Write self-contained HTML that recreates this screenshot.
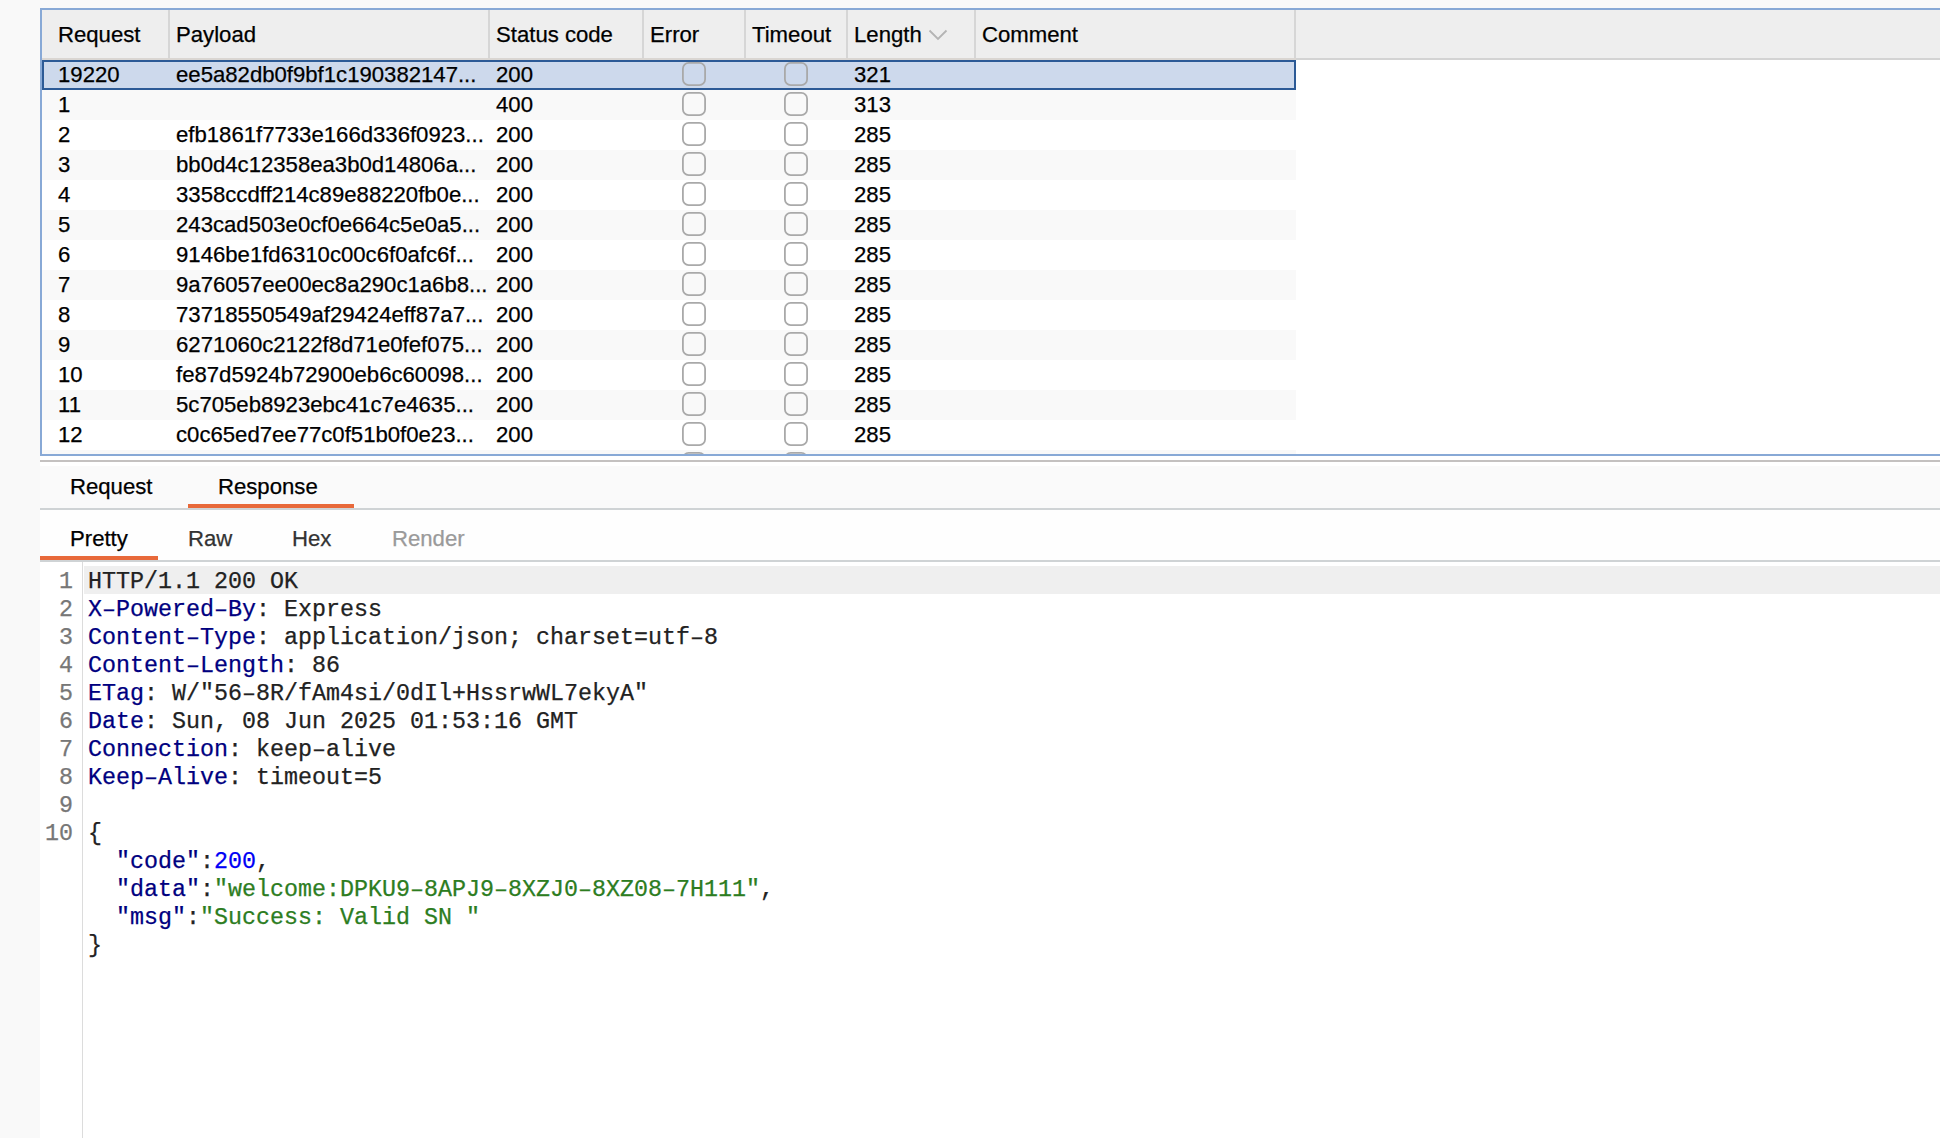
<!DOCTYPE html><html><head><meta charset="utf-8"><style>html,body{margin:0;padding:0;}
body{width:1940px;height:1138px;background:#f9f9f9;position:relative;overflow:hidden;font-family:"Liberation Sans",sans-serif;font-size:22.15px;color:#000;-webkit-text-stroke:0.25px currentColor;}
div,i,svg{position:absolute;}
.tblbg{left:40px;top:8px;width:1900px;height:448px;background:#fff;}
.hdr{left:42px;top:10px;width:1898px;height:48px;background:#eeeeee;}
.hdrline{left:42px;top:58px;width:1898px;height:2px;background:linear-gradient(to right,#dad6d2 1254px,#d3d3d3 1254px);}
.ht{top:23px;line-height:24px;white-space:nowrap;}
.hd{top:10px;height:48px;width:2px;background:#d6d6d6;}
.chev{left:928px;top:28.5px;}
.row{left:42px;width:1254px;height:30px;background:#fff;}
.row.odd{background:#f9f9f9;}
.row.sel{background:#cdd9ec;box-shadow:inset 0 0 0 2px #2c5a96;}
.c{line-height:30px;white-space:nowrap;}
.cb{}
.bl{background:#88a9d6;}
.bl-l{left:40px;top:8px;width:2px;height:448px;}
.bl-t{left:40px;top:8px;width:1900px;height:2px;}
.bl-b{left:40px;top:454px;width:1900px;height:2px;}
.below{left:40px;top:456px;width:1900px;height:682px;background:#fff;}
.sep1{left:40px;top:460px;width:1900px;height:2px;background:#c4c1c0;}
.tabbar{left:40px;top:466px;width:1900px;height:42px;background:#fafafa;}
.tabline{left:40px;top:508px;width:1900px;height:2px;background:#cfd3d5;}
.tt{line-height:24px;white-space:nowrap;color:#000;}
.tt.g{color:#333;}
.tt.lg{color:#9a9a9a;}
.ul{height:4px;background:#e8693a;}
.subbar{left:40px;top:510px;width:1900px;height:50px;background:#fefefe;}
.subline{left:40px;top:560px;width:1900px;height:2px;background:#cfd3d5;}
.codebg{left:40px;top:562px;width:1900px;height:576px;background:#fff;}
.gutline{left:82px;top:562px;width:1px;height:576px;background:#dcdcdc;}
.curline{left:84px;top:566px;width:1856px;height:28px;background:#efefef;}
.ln{left:41px;width:32px;margin-top:2px;text-align:right;font-family:"Liberation Mono",monospace;font-size:23.33px;line-height:28px;color:#777;}
.cl{left:88px;margin-top:2px;font-family:"Liberation Mono",monospace;font-size:23.33px;line-height:28px;color:#222;white-space:pre;}
.k{color:#000080;}
.k0{color:#222;}
.s{color:#2d7d1f;}
.n{color:#0000f5;}
</style></head><body>
<div class="tblbg"></div>
<div class="hdr"></div><div class="hdrline"></div>
<div class="ht" style="left:58px">Request</div>
<div class="ht" style="left:176px">Payload</div>
<div class="ht" style="left:496px">Status code</div>
<div class="ht" style="left:650px">Error</div>
<div class="ht" style="left:752px">Timeout</div>
<div class="ht" style="left:854px">Length</div>
<div class="ht" style="left:982px">Comment</div>
<div class="hd" style="left:168px"></div>
<div class="hd" style="left:488px"></div>
<div class="hd" style="left:642px"></div>
<div class="hd" style="left:744px"></div>
<div class="hd" style="left:846px"></div>
<div class="hd" style="left:974px"></div>
<div class="hd" style="left:1294px"></div>
<svg class="chev" width="20" height="12" viewBox="0 0 20 12"><path d="M1.5 1.5 L10 10 L18.5 1.5" fill="none" stroke="#b4b4b4" stroke-width="1.8"/></svg>
<div class="row sel" style="top:60px"></div>
<div class="c" style="left:58px;top:60px">19220</div>
<div class="c" style="left:176px;top:60px">ee5a82db0f9bf1c190382147...</div>
<div class="c" style="left:496px;top:60px">200</div>
<div class="c" style="left:854px;top:60px">321</div>
<svg class="cb" style="left:681px;top:61px" width="26" height="26" viewBox="0 0 26 26"><rect x="1.9" y="1.9" width="22.2" height="22.2" rx="5.8" fill="none" stroke="#a9a9a9" stroke-width="1.8"/></svg>
<svg class="cb" style="left:783px;top:61px" width="26" height="26" viewBox="0 0 26 26"><rect x="1.9" y="1.9" width="22.2" height="22.2" rx="5.8" fill="none" stroke="#a9a9a9" stroke-width="1.8"/></svg>
<div class="row odd" style="top:90px"></div>
<div class="c" style="left:58px;top:90px">1</div>
<div class="c" style="left:496px;top:90px">400</div>
<div class="c" style="left:854px;top:90px">313</div>
<svg class="cb" style="left:681px;top:91px" width="26" height="26" viewBox="0 0 26 26"><rect x="1.9" y="1.9" width="22.2" height="22.2" rx="5.8" fill="none" stroke="#a9a9a9" stroke-width="1.8"/></svg>
<svg class="cb" style="left:783px;top:91px" width="26" height="26" viewBox="0 0 26 26"><rect x="1.9" y="1.9" width="22.2" height="22.2" rx="5.8" fill="none" stroke="#a9a9a9" stroke-width="1.8"/></svg>
<div class="row" style="top:120px"></div>
<div class="c" style="left:58px;top:120px">2</div>
<div class="c" style="left:176px;top:120px">efb1861f7733e166d336f0923...</div>
<div class="c" style="left:496px;top:120px">200</div>
<div class="c" style="left:854px;top:120px">285</div>
<svg class="cb" style="left:681px;top:121px" width="26" height="26" viewBox="0 0 26 26"><rect x="1.9" y="1.9" width="22.2" height="22.2" rx="5.8" fill="none" stroke="#a9a9a9" stroke-width="1.8"/></svg>
<svg class="cb" style="left:783px;top:121px" width="26" height="26" viewBox="0 0 26 26"><rect x="1.9" y="1.9" width="22.2" height="22.2" rx="5.8" fill="none" stroke="#a9a9a9" stroke-width="1.8"/></svg>
<div class="row odd" style="top:150px"></div>
<div class="c" style="left:58px;top:150px">3</div>
<div class="c" style="left:176px;top:150px">bb0d4c12358ea3b0d14806a...</div>
<div class="c" style="left:496px;top:150px">200</div>
<div class="c" style="left:854px;top:150px">285</div>
<svg class="cb" style="left:681px;top:151px" width="26" height="26" viewBox="0 0 26 26"><rect x="1.9" y="1.9" width="22.2" height="22.2" rx="5.8" fill="none" stroke="#a9a9a9" stroke-width="1.8"/></svg>
<svg class="cb" style="left:783px;top:151px" width="26" height="26" viewBox="0 0 26 26"><rect x="1.9" y="1.9" width="22.2" height="22.2" rx="5.8" fill="none" stroke="#a9a9a9" stroke-width="1.8"/></svg>
<div class="row" style="top:180px"></div>
<div class="c" style="left:58px;top:180px">4</div>
<div class="c" style="left:176px;top:180px">3358ccdff214c89e88220fb0e...</div>
<div class="c" style="left:496px;top:180px">200</div>
<div class="c" style="left:854px;top:180px">285</div>
<svg class="cb" style="left:681px;top:181px" width="26" height="26" viewBox="0 0 26 26"><rect x="1.9" y="1.9" width="22.2" height="22.2" rx="5.8" fill="none" stroke="#a9a9a9" stroke-width="1.8"/></svg>
<svg class="cb" style="left:783px;top:181px" width="26" height="26" viewBox="0 0 26 26"><rect x="1.9" y="1.9" width="22.2" height="22.2" rx="5.8" fill="none" stroke="#a9a9a9" stroke-width="1.8"/></svg>
<div class="row odd" style="top:210px"></div>
<div class="c" style="left:58px;top:210px">5</div>
<div class="c" style="left:176px;top:210px">243cad503e0cf0e664c5e0a5...</div>
<div class="c" style="left:496px;top:210px">200</div>
<div class="c" style="left:854px;top:210px">285</div>
<svg class="cb" style="left:681px;top:211px" width="26" height="26" viewBox="0 0 26 26"><rect x="1.9" y="1.9" width="22.2" height="22.2" rx="5.8" fill="none" stroke="#a9a9a9" stroke-width="1.8"/></svg>
<svg class="cb" style="left:783px;top:211px" width="26" height="26" viewBox="0 0 26 26"><rect x="1.9" y="1.9" width="22.2" height="22.2" rx="5.8" fill="none" stroke="#a9a9a9" stroke-width="1.8"/></svg>
<div class="row" style="top:240px"></div>
<div class="c" style="left:58px;top:240px">6</div>
<div class="c" style="left:176px;top:240px">9146be1fd6310c00c6f0afc6f...</div>
<div class="c" style="left:496px;top:240px">200</div>
<div class="c" style="left:854px;top:240px">285</div>
<svg class="cb" style="left:681px;top:241px" width="26" height="26" viewBox="0 0 26 26"><rect x="1.9" y="1.9" width="22.2" height="22.2" rx="5.8" fill="none" stroke="#a9a9a9" stroke-width="1.8"/></svg>
<svg class="cb" style="left:783px;top:241px" width="26" height="26" viewBox="0 0 26 26"><rect x="1.9" y="1.9" width="22.2" height="22.2" rx="5.8" fill="none" stroke="#a9a9a9" stroke-width="1.8"/></svg>
<div class="row odd" style="top:270px"></div>
<div class="c" style="left:58px;top:270px">7</div>
<div class="c" style="left:176px;top:270px">9a76057ee00ec8a290c1a6b8...</div>
<div class="c" style="left:496px;top:270px">200</div>
<div class="c" style="left:854px;top:270px">285</div>
<svg class="cb" style="left:681px;top:271px" width="26" height="26" viewBox="0 0 26 26"><rect x="1.9" y="1.9" width="22.2" height="22.2" rx="5.8" fill="none" stroke="#a9a9a9" stroke-width="1.8"/></svg>
<svg class="cb" style="left:783px;top:271px" width="26" height="26" viewBox="0 0 26 26"><rect x="1.9" y="1.9" width="22.2" height="22.2" rx="5.8" fill="none" stroke="#a9a9a9" stroke-width="1.8"/></svg>
<div class="row" style="top:300px"></div>
<div class="c" style="left:58px;top:300px">8</div>
<div class="c" style="left:176px;top:300px">73718550549af29424eff87a7...</div>
<div class="c" style="left:496px;top:300px">200</div>
<div class="c" style="left:854px;top:300px">285</div>
<svg class="cb" style="left:681px;top:301px" width="26" height="26" viewBox="0 0 26 26"><rect x="1.9" y="1.9" width="22.2" height="22.2" rx="5.8" fill="none" stroke="#a9a9a9" stroke-width="1.8"/></svg>
<svg class="cb" style="left:783px;top:301px" width="26" height="26" viewBox="0 0 26 26"><rect x="1.9" y="1.9" width="22.2" height="22.2" rx="5.8" fill="none" stroke="#a9a9a9" stroke-width="1.8"/></svg>
<div class="row odd" style="top:330px"></div>
<div class="c" style="left:58px;top:330px">9</div>
<div class="c" style="left:176px;top:330px">6271060c2122f8d71e0fef075...</div>
<div class="c" style="left:496px;top:330px">200</div>
<div class="c" style="left:854px;top:330px">285</div>
<svg class="cb" style="left:681px;top:331px" width="26" height="26" viewBox="0 0 26 26"><rect x="1.9" y="1.9" width="22.2" height="22.2" rx="5.8" fill="none" stroke="#a9a9a9" stroke-width="1.8"/></svg>
<svg class="cb" style="left:783px;top:331px" width="26" height="26" viewBox="0 0 26 26"><rect x="1.9" y="1.9" width="22.2" height="22.2" rx="5.8" fill="none" stroke="#a9a9a9" stroke-width="1.8"/></svg>
<div class="row" style="top:360px"></div>
<div class="c" style="left:58px;top:360px">10</div>
<div class="c" style="left:176px;top:360px">fe87d5924b72900eb6c60098...</div>
<div class="c" style="left:496px;top:360px">200</div>
<div class="c" style="left:854px;top:360px">285</div>
<svg class="cb" style="left:681px;top:361px" width="26" height="26" viewBox="0 0 26 26"><rect x="1.9" y="1.9" width="22.2" height="22.2" rx="5.8" fill="none" stroke="#a9a9a9" stroke-width="1.8"/></svg>
<svg class="cb" style="left:783px;top:361px" width="26" height="26" viewBox="0 0 26 26"><rect x="1.9" y="1.9" width="22.2" height="22.2" rx="5.8" fill="none" stroke="#a9a9a9" stroke-width="1.8"/></svg>
<div class="row odd" style="top:390px"></div>
<div class="c" style="left:58px;top:390px">11</div>
<div class="c" style="left:176px;top:390px">5c705eb8923ebc41c7e4635...</div>
<div class="c" style="left:496px;top:390px">200</div>
<div class="c" style="left:854px;top:390px">285</div>
<svg class="cb" style="left:681px;top:391px" width="26" height="26" viewBox="0 0 26 26"><rect x="1.9" y="1.9" width="22.2" height="22.2" rx="5.8" fill="none" stroke="#a9a9a9" stroke-width="1.8"/></svg>
<svg class="cb" style="left:783px;top:391px" width="26" height="26" viewBox="0 0 26 26"><rect x="1.9" y="1.9" width="22.2" height="22.2" rx="5.8" fill="none" stroke="#a9a9a9" stroke-width="1.8"/></svg>
<div class="row" style="top:420px"></div>
<div class="c" style="left:58px;top:420px">12</div>
<div class="c" style="left:176px;top:420px">c0c65ed7ee77c0f51b0f0e23...</div>
<div class="c" style="left:496px;top:420px">200</div>
<div class="c" style="left:854px;top:420px">285</div>
<svg class="cb" style="left:681px;top:421px" width="26" height="26" viewBox="0 0 26 26"><rect x="1.9" y="1.9" width="22.2" height="22.2" rx="5.8" fill="none" stroke="#a9a9a9" stroke-width="1.8"/></svg>
<svg class="cb" style="left:783px;top:421px" width="26" height="26" viewBox="0 0 26 26"><rect x="1.9" y="1.9" width="22.2" height="22.2" rx="5.8" fill="none" stroke="#a9a9a9" stroke-width="1.8"/></svg>
<div class="row odd" style="top:450px"></div>
<svg class="cb" style="left:681px;top:451px" width="26" height="26" viewBox="0 0 26 26"><rect x="1.9" y="1.9" width="22.2" height="22.2" rx="5.8" fill="none" stroke="#a9a9a9" stroke-width="1.8"/></svg>
<svg class="cb" style="left:783px;top:451px" width="26" height="26" viewBox="0 0 26 26"><rect x="1.9" y="1.9" width="22.2" height="22.2" rx="5.8" fill="none" stroke="#a9a9a9" stroke-width="1.8"/></svg>
<div class="bl bl-l"></div><div class="bl bl-t"></div><div class="bl bl-b"></div>
<div class="below"></div>
<div class="sep1"></div><div class="tabbar"></div><div class="tabline"></div>
<div class="tt" style="left:70px;top:475px">Request</div><div class="tt" style="left:218px;top:475px">Response</div>
<div class="ul" style="left:188px;top:504px;width:166px"></div>
<div class="subbar"></div><div class="subline"></div>
<div class="tt" style="left:70px;top:527px">Pretty</div><div class="tt g" style="left:188px;top:527px">Raw</div><div class="tt g" style="left:292px;top:527px">Hex</div><div class="tt lg" style="left:392px;top:527px">Render</div>
<div class="ul" style="left:40px;top:556px;width:118px"></div>
<div class="codebg"></div><div class="gutline"></div><div class="curline"></div>
<div class="ln" style="top:566px">1</div>
<div class="cl" style="top:566px"><span class="k0">HTTP/1.1 200 OK</span></div>
<div class="ln" style="top:594px">2</div>
<div class="cl" style="top:594px"><span class="k">X–Powered–By</span>: Express</div>
<div class="ln" style="top:622px">3</div>
<div class="cl" style="top:622px"><span class="k">Content–Type</span>: application/json; charset=utf–8</div>
<div class="ln" style="top:650px">4</div>
<div class="cl" style="top:650px"><span class="k">Content–Length</span>: 86</div>
<div class="ln" style="top:678px">5</div>
<div class="cl" style="top:678px"><span class="k">ETag</span>: W/"56–8R/fAm4si/0dIl+HssrwWL7ekyA"</div>
<div class="ln" style="top:706px">6</div>
<div class="cl" style="top:706px"><span class="k">Date</span>: Sun, 08 Jun 2025 01:53:16 GMT</div>
<div class="ln" style="top:734px">7</div>
<div class="cl" style="top:734px"><span class="k">Connection</span>: keep–alive</div>
<div class="ln" style="top:762px">8</div>
<div class="cl" style="top:762px"><span class="k">Keep–Alive</span>: timeout=5</div>
<div class="ln" style="top:790px">9</div>
<div class="cl" style="top:790px"></div>
<div class="ln" style="top:818px">10</div>
<div class="cl" style="top:818px">{</div>
<div class="cl" style="top:846px">  <span class="k">"code"</span>:<span class="n">200</span>,</div>
<div class="cl" style="top:874px">  <span class="k">"data"</span>:<span class="s">"welcome:DPKU9–8APJ9–8XZJ0–8XZ08–7H111"</span>,</div>
<div class="cl" style="top:902px">  <span class="k">"msg"</span>:<span class="s">"Success: Valid SN "</span></div>
<div class="cl" style="top:930px">}</div>
</body></html>
